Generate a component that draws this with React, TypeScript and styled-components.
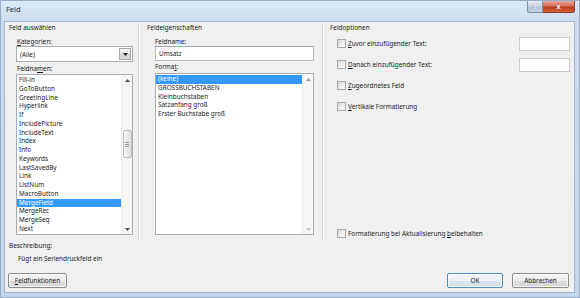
import React from "react";
import styled, { createGlobalStyle } from "styled-components";

const Global = createGlobalStyle`
  html, body { margin: 0; padding: 0; }
  body {
    width: 580px; height: 298px; overflow: hidden; background: #c7d8ec;
    font-family: "Noto Sans", "Liberation Sans", sans-serif;
  }
  * { box-sizing: border-box; }
`;

const Window = styled.div`
  width: 580px;
  height: 298px;
  display: flex;
  flex-direction: column;
  background: linear-gradient(to bottom, #dde9f6 0px, #cadbee 22px, #c4d6eb 100%);
  border: 1px solid #98aec8;
  font-size: 6.4px;
  color: #1b1b1b;
`;

const TitleBar = styled.div`
  height: 20px;
  flex: none;
  display: flex;
  align-items: flex-start;
  padding-left: 5px;
`;

const Title = styled.div`
  line-height: 16px;
  font-size: 7.4px;
  color: #1e2a38;
`;

const CaptionButtons = styled.div`
  margin-left: auto;
  margin-right: 4px;
  display: flex;
`;

const CaptionButton = styled.div<{ $close?: boolean }>`
  height: 12px;
  width: ${(p) => (p.$close ? 32 : 16)}px;
  display: flex;
  align-items: center;
  justify-content: center;
  font-family: "Liberation Sans", sans-serif;
  font-weight: bold;
  font-size: ${(p) => (p.$close ? 8 : 7)}px;
  color: #fff;
  border: 1px solid ${(p) => (p.$close ? "#8a3a2a" : "#7b8ea6")};
  border-top: none;
  border-left-width: ${(p) => (p.$close ? 0 : 1)}px;
  border-radius: ${(p) => (p.$close ? "0 0 3px 0" : "0 0 0 3px")};
  background: ${(p) =>
    p.$close
      ? "linear-gradient(to bottom, #e9a99a 0%, #d5715a 45%, #c2391d 55%, #d0633f 100%)"
      : "linear-gradient(to bottom, #e6edf5 0%, #cbd7e5 45%, #b3c4d8 55%, #c6d5e6 100%)"};
  text-shadow: 0 0 2px rgba(60, 60, 60, 0.6);
`;

const Client = styled.div`
  flex: 1;
  margin: 0 4px 4px 3px;
  background: #f0f0f0;
  border: 1px solid #a3b5cb;
  display: flex;
  flex-direction: column;
`;

const TopArea = styled.div`
  height: 218px;
  flex: none;
  display: flex;
`;

const Column = styled.div<{ $w?: number; $pad: number }>`
  ${(p) => (p.$w ? `width: ${p.$w}px; flex: none;` : "flex: 1;")}
  padding-top: 1px;
  padding-left: ${(p) => p.$pad}px;
  display: flex;
  flex-direction: column;
`;

const Separator = styled.div`
  width: 2px;
  flex: none;
  margin-top: 2px;
  border-left: 1px solid #d5d8dc;
  border-right: 1px solid #ffffff;
`;

const GroupTitle = styled.div`
  line-height: 10px;
  height: 10px;
`;

const FieldLabel = styled.div<{ $top: number; $indent: number }>`
  margin-top: ${(p) => p.$top}px;
  margin-left: ${(p) => p.$indent}px;
  line-height: 8px;
  height: 8px;
`;

const Key = styled.span`
  text-decoration: underline;
  text-underline-offset: 1px;
`;

const Combo = styled.div`
  margin-left: 7px;
  width: 117px;
  height: 16px;
  background: #fff;
  border: 1px solid #abadb3;
  display: flex;
  align-items: center;
  padding: 1px;
`;

const ComboText = styled.div`
  flex: 1;
  padding-left: 2px;
`;

const DropButton = styled.div`
  width: 12px;
  height: 12px;
  border: 1px solid #a7a7a7;
  background: linear-gradient(to bottom, #f4f4f4, #e2e2e2 50%, #d4d4d4 51%, #dcdcdc);
  display: flex;
  align-items: center;
  justify-content: center;
`;

const TextInput = styled.div<{ $w: number; $indent: number }>`
  margin-left: ${(p) => p.$indent}px;
  width: ${(p) => p.$w}px;
  height: 15px;
  background: #fff;
  border: 1px solid #b7bac1;
  border-top-color: #a6a9b0;
  padding-left: 3px;
  line-height: 13px;
`;

const ListBox = styled.div<{ $w: number; $h: number; $indent: number; $top: number }>`
  margin-left: ${(p) => p.$indent}px;
  margin-top: ${(p) => p.$top}px;
  width: ${(p) => p.$w}px;
  height: ${(p) => p.$h}px;
  background: #fff;
  border: 1px solid #a9acb3;
  display: flex;
`;

const ListItems = styled.div<{ $pt: number }>`
  flex: 1;
  padding-top: ${(p) => p.$pt}px;
  display: flex;
  flex-direction: column;
`;

const ListRow = styled.div<{ $sel?: boolean }>`
  height: 8.75px;
  line-height: 8.75px;
  padding-left: 2px;
  white-space: nowrap;
  background: ${(p) => (p.$sel ? "#3399ff" : "transparent")};
  color: ${(p) => (p.$sel ? "#fff" : "inherit")};
`;

const ScrollBar = styled.div`
  width: 11px;
  flex: none;
  background: #f6f6f6;
  border-left: 1px solid #eeeeee;
  display: flex;
  flex-direction: column;
  align-items: center;
`;

const ScrollArrow = styled.div`
  height: 10px;
  width: 100%;
  display: flex;
  align-items: center;
  justify-content: center;
  flex: none;
`;

const ScrollTrack = styled.div`
  flex: 1;
  width: 100%;
  display: flex;
  flex-direction: column;
  align-items: center;
`;

const Thumb = styled.div<{ $top: number; $h: number }>`
  margin-top: ${(p) => p.$top}px;
  width: 9px;
  height: ${(p) => p.$h}px;
  border: 1px solid #bcbcbc;
  border-radius: 2px;
  background: linear-gradient(to right, #f5f5f5, #e9e9e9 50%, #e0e0e0);
  display: flex;
  flex-direction: column;
  align-items: center;
  justify-content: center;
  gap: 1px;
`;

const Grip = styled.div`
  width: 4px;
  height: 1px;
  background: #999999;
`;

const OptionRow = styled.div<{ $h: number }>`
  height: ${(p) => p.$h}px;
  flex: none;
  display: flex;
  align-items: center;
  padding-left: 7px;
  padding-right: 4px;
`;

const CheckBox = styled.div`
  width: 9px;
  height: 9px;
  flex: none;
  border: 1px solid #a8a8a8;
  background: linear-gradient(135deg, #d6d6d6, #f4f4f4 70%, #fafafa);
  margin-right: 2px;
`;

const OptionText = styled.div`
  flex: 1;
  line-height: 9px;
  white-space: nowrap;
`;

const SmallInput = styled.div`
  width: 51px;
  height: 14px;
  background: #fff;
  border: 1px solid #c8cbd2;
`;

const BottomArea = styled.div`
  flex: 1;
  display: flex;
  flex-direction: column;
  padding-top: 2px;
`;

const InfoLine = styled.div<{ $indent: number; $top: number }>`
  padding-left: ${(p) => p.$indent}px;
  margin-top: ${(p) => p.$top}px;
  line-height: 8px;
  height: 8px;
`;

const ButtonRow = styled.div`
  margin-top: 10px;
  display: flex;
  padding: 0 5px 0 3px;
  gap: 9px;
`;

const Button = styled.div<{ $w: number; $default?: boolean }>`
  width: ${(p) => p.$w}px;
  height: 15px;
  border: 1px solid ${(p) => (p.$default ? "#4f8ec4" : "#8c8c8c")};
  border-radius: 2px;
  background: ${(p) =>
    p.$default
      ? "linear-gradient(to bottom, #f3f7fb, #e8eff6 50%, #dbe5ef 51%, #d4e0ec)"
      : "linear-gradient(to bottom, #f5f5f5, #ececec 50%, #dfdfdf 51%, #d6d6d6)"};
  box-shadow: inset 0 0 0 1px rgba(255, 255, 255, 0.7);
  display: flex;
  align-items: center;
  justify-content: center;
  line-height: 13px;
`;

const Spacer = styled.div`
  flex: 1;
`;

const Arrow = ({ down, color = "#4d4d4d" }: { down?: boolean; color?: string }) => (
  <svg width="5" height="3" viewBox="0 0 5 3">
    <polygon points={down ? "0,0 5,0 2.5,3" : "0,3 5,3 2.5,0"} fill={color} />
  </svg>
);

const fieldNames = [
  "Fill-in",
  "GoToButton",
  "GreetingLine",
  "Hyperlink",
  "If",
  "IncludePicture",
  "IncludeText",
  "Index",
  "Info",
  "Keywords",
  "LastSavedBy",
  "Link",
  "ListNum",
  "MacroButton",
  "MergeField",
  "MergeRec",
  "MergeSeq",
  "Next",
];

const formats = ["(keine)", "GROSSBUCHSTABEN", "Kleinbuchstaben", "Satzanfang groß", "Erster Buchstabe groß"];

export default function App() {
  return (
    <>
      <Global />
      <Window>
        <TitleBar>
          <Title>Feld</Title>
          <CaptionButtons>
            <CaptionButton>?</CaptionButton>
            <CaptionButton $close>x</CaptionButton>
          </CaptionButtons>
        </TitleBar>
        <Client>
          <TopArea>
            <Column $w={133} $pad={4}>
              <GroupTitle>Feld auswählen</GroupTitle>
              <FieldLabel $top={5} $indent={8}>
                <Key>K</Key>ategorien:
              </FieldLabel>
              <Combo>
                <ComboText>(Alle)</ComboText>
                <DropButton>
                  <Arrow down color="#1a1a1a" />
                </DropButton>
              </Combo>
              <FieldLabel $top={3} $indent={8}>
                Feldna<Key>m</Key>en:
              </FieldLabel>
              <ListBox $w={117} $h={161} $indent={7} $top={1}>
                <ListItems $pt={1}>
                  {fieldNames.map((n) => (
                    <ListRow key={n} $sel={n === "MergeField"}>
                      {n}
                    </ListRow>
                  ))}
                </ListItems>
                <ScrollBar>
                  <ScrollArrow>
                    <Arrow />
                  </ScrollArrow>
                  <ScrollTrack>
                    <Thumb $top={45} $h={28}>
                      <Grip />
                      <Grip />
                      <Grip />
                    </Thumb>
                  </ScrollTrack>
                  <ScrollArrow>
                    <Arrow down />
                  </ScrollArrow>
                </ScrollBar>
              </ListBox>
            </Column>
            <Separator />
            <Column $w={182} $pad={7}>
              <GroupTitle>Feldeigenschaften</GroupTitle>
              <FieldLabel $top={5} $indent={8}>
                Feldname:
              </FieldLabel>
              <TextInput $w={159} $indent={8}>
                Umsatz
              </TextInput>
              <FieldLabel $top={2} $indent={8}>
                Forma<Key>t</Key>:
              </FieldLabel>
              <ListBox $w={159} $h={162} $indent={8} $top={2}>
                <ListItems $pt={1}>
                  {formats.map((f, i) => (
                    <ListRow key={f} $sel={i === 0}>
                      {f}
                    </ListRow>
                  ))}
                </ListItems>
                <ScrollBar>
                  <ScrollArrow>
                    <Arrow color="#9a9a9a" />
                  </ScrollArrow>
                  <ScrollTrack />
                  <ScrollArrow>
                    <Arrow down color="#c8c8c8" />
                  </ScrollArrow>
                </ScrollBar>
              </ListBox>
            </Column>
            <Separator />
            <Column $pad={6}>
              <GroupTitle>Feldoptionen</GroupTitle>
              <OptionRow $h={21}>
                <CheckBox />
                <OptionText>
                  <Key>Z</Key>uvor einzufügender Text:
                </OptionText>
                <SmallInput />
              </OptionRow>
              <OptionRow $h={21}>
                <CheckBox />
                <OptionText>
                  <Key>D</Key>anach einzufügender Text:
                </OptionText>
                <SmallInput />
              </OptionRow>
              <OptionRow $h={21}>
                <CheckBox />
                <OptionText>
                  <Key>Z</Key>ugeordnetes Feld
                </OptionText>
              </OptionRow>
              <OptionRow $h={21}>
                <CheckBox />
                <OptionText>
                  <Key>V</Key>ertikale Formatierung
                </OptionText>
              </OptionRow>
              <Spacer />
              <OptionRow $h={14}>
                <CheckBox />
                <OptionText>
                  Formatierung bei Aktualisierung <Key>b</Key>eibehalten
                </OptionText>
              </OptionRow>
            </Column>
          </TopArea>
          <BottomArea>
            <InfoLine $indent={4} $top={0}>
              Beschreibung:
            </InfoLine>
            <InfoLine $indent={13} $top={5}>
              Fügt ein Seriendruckfeld ein
            </InfoLine>
            <ButtonRow>
              <Button $w={59}>
                <span>
                  <Key>F</Key>eldfunktionen
                </span>
              </Button>
              <Spacer />
              <Button $w={56} $default>
                OK
              </Button>
              <Button $w={57}>Abbrechen</Button>
            </ButtonRow>
          </BottomArea>
        </Client>
      </Window>
    </>
  );
}
